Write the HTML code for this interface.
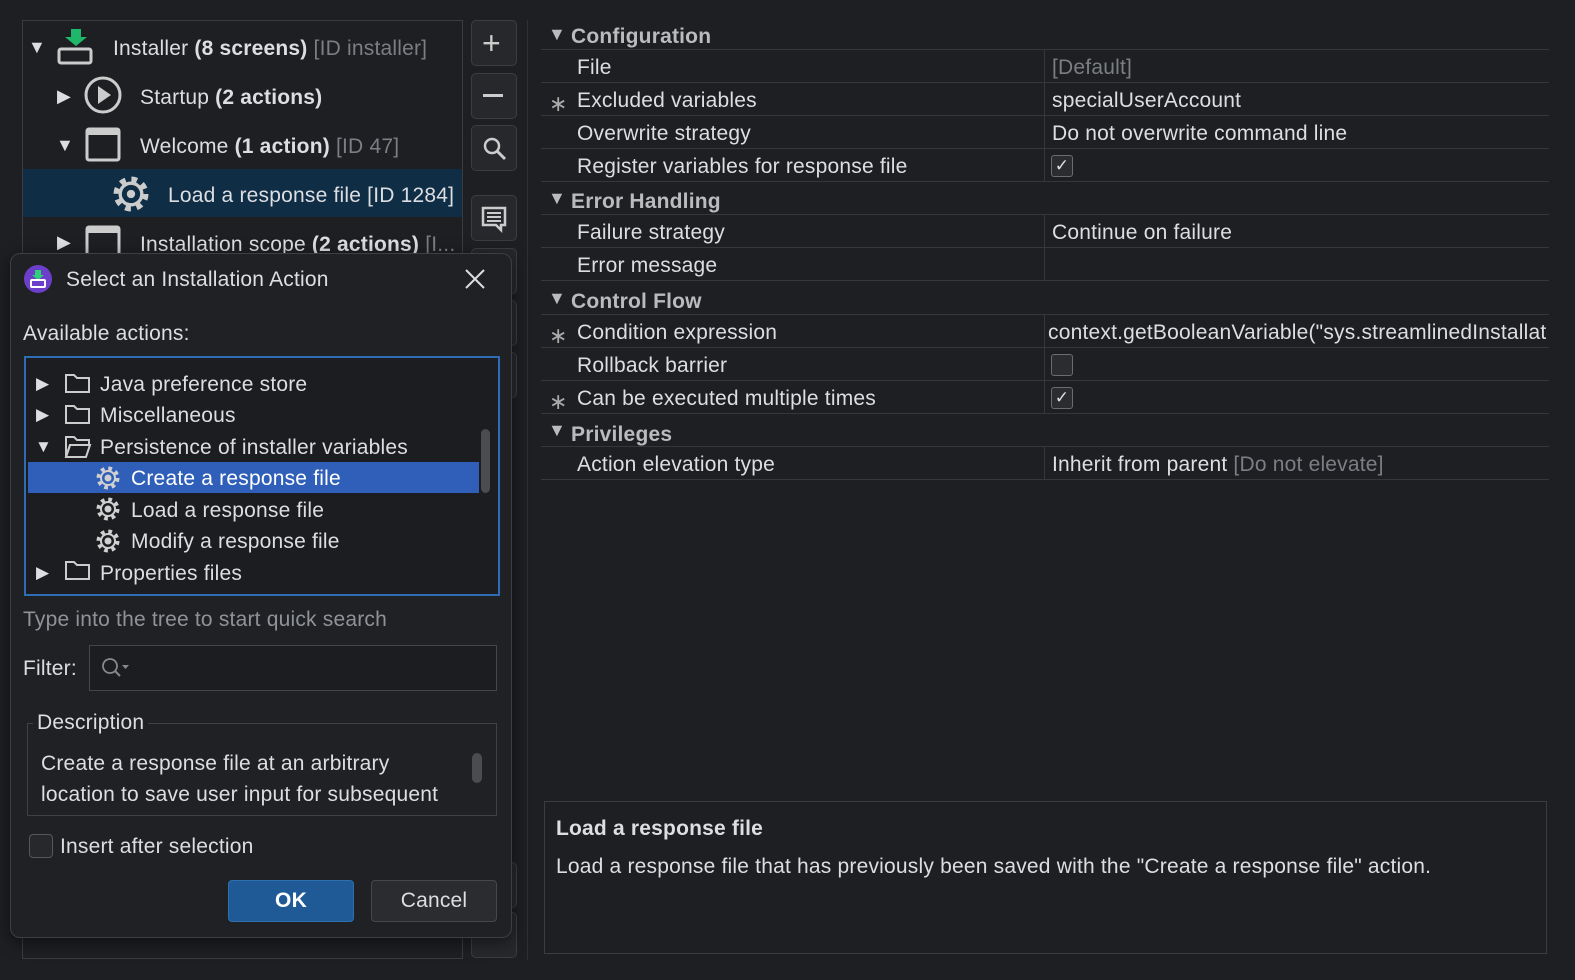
<!DOCTYPE html>
<html><head><meta charset="utf-8"><style>
*{box-sizing:border-box;margin:0;padding:0}
body{width:1575px;height:980px;background:#1e1f22;font-family:"Liberation Sans",sans-serif;color:#dcdee2;font-size:21px;letter-spacing:0.2px;position:relative;overflow:hidden}
.a{position:absolute;white-space:nowrap}
.t2{margin-top:2px}
.g{color:#7b7e83}
b{font-weight:bold}
.btn{position:absolute;left:471px;width:46px;height:46px;border:1px solid #3b3d41;border-radius:5px;background:#26282b}
.row{position:absolute;left:541px;width:1008px;border-bottom:1px solid #35373b}
.row .k{position:absolute;left:36px;top:6px}
.row .v{position:absolute;left:511px;top:6px}
.row .vl{position:absolute;left:503px;top:0;bottom:0;border-left:1px solid #35373b}
.hd{font-weight:bold;color:#b9bbbf}
.hd .t{position:absolute;left:7px;top:4px;font-size:18px}
.hd .k{left:30px}
.st{position:absolute;left:8px;top:8px;font-size:22px;color:#aaa}
.cb{position:absolute;left:510px;top:6px;width:22px;height:22px;border:1.5px solid #6a6c70;border-radius:3px;background:#2a2c2f;font-size:17px;text-align:center;line-height:19px;color:#e0e0e0}
</style></head><body>

<div class="a" style="left:22px;top:20px;width:441px;height:939px;border:1px solid #3a3c40"></div>
<div class="a" style="left:23px;top:169px;width:439px;height:48px;background:#0f2d45"></div>
<div class="a" style="left:28px;top:37px;font-size:18px">▼</div>
<svg class="a" style="left:56px;top:27px" width="40" height="40"><path d="M15 2h10v8h6l-11 9-11-9h6z" fill="#1fb86a"/><rect x="3" y="22" width="32" height="14" rx="2" fill="none" stroke="#ccc" stroke-width="3"/></svg>
<div class="a" style="left:113px;top:37px">Installer <b>(8 screens)</b> <span class="g">[ID installer]</span></div>
<div class="a" style="left:57px;top:86px;font-size:18px">▶</div>
<svg class="a" style="left:84px;top:76px" width="40" height="40"><circle cx="19" cy="19" r="17" fill="none" stroke="#ccc" stroke-width="3"/><path d="M14 10l13 9-13 9z" fill="#ccc"/></svg>
<div class="a" style="left:140px;top:86px">Startup <b>(2 actions)</b></div>
<div class="a" style="left:56px;top:135px;font-size:18px">▼</div>
<svg class="a" style="left:85px;top:127px" width="38" height="36"><rect x="2" y="2" width="32" height="31" rx="2" fill="none" stroke="#ccc" stroke-width="3"/><rect x="2" y="2" width="32" height="6" fill="#ccc"/></svg>
<div class="a" style="left:140px;top:135px">Welcome <b>(1 action)</b> <span class="g">[ID 47]</span></div>
<svg class="a" style="left:111px;top:174px" width="40" height="40" viewBox="0 0 24 24"><circle cx="12" cy="12" r="8" fill="none" stroke="#ccc" stroke-width="5" stroke-dasharray="3.1 3.18"/><circle cx="12" cy="12" r="6.5" fill="none" stroke="#ccc" stroke-width="2"/><circle cx="12" cy="12" r="2.5" fill="#ccc"/></svg>
<div class="a" style="left:168px;top:184px">Load a response file [ID 1284]</div>
<div class="a" style="left:57px;top:232px;font-size:18px">▶</div>
<svg class="a" style="left:85px;top:225px" width="38" height="30"><rect x="2" y="2" width="32" height="31" rx="2" fill="none" stroke="#ccc" stroke-width="3"/><rect x="2" y="2" width="32" height="6" fill="#ccc"/></svg>
<div class="a" style="left:140px;top:233px">Installation scope <b>(2 actions)</b> <span class="g">[I...</span></div>

<div class="btn" style="top:20px"><div class="a" style="left:10px;top:4px;font-size:32px;color:#ccc">+</div></div>
<div class="btn" style="top:73px"><div class="a" style="left:11px;top:20px;width:20px;height:3px;background:#ccc"></div></div>
<div class="btn" style="top:125px"><svg class="a" style="left:9px;top:9px" width="28" height="28"><circle cx="11" cy="11" r="7" fill="none" stroke="#ccc" stroke-width="2.5"/><path d="M16 16l8 8" stroke="#ccc" stroke-width="3"/></svg></div>
<div class="btn" style="top:195px"><svg class="a" style="left:9px;top:10px" width="28" height="28"><path d="M2 2h22v17h-4v5l-5-5H2z" fill="none" stroke="#ccc" stroke-width="2.5"/><path d="M6 7h14M6 11h14M6 15h14" stroke="#ccc" stroke-width="2"/></svg></div>
<div class="btn" style="top:248px"></div><div class="btn" style="top:300px"></div><div class="btn" style="top:352px"></div><div class="btn" style="top:862px"></div><div class="btn" style="top:912px"></div>
<div class="a" style="left:527px;top:20px;width:1px;height:940px;background:#2e3034"></div>

<div class="row hd" style="top:20px;height:30px"><span class="t">▼</span><span class="k a" style="top:5px">Configuration</span></div>
<div class="row" style="top:50px;height:33px"><span class="k">File</span><span class="vl"></span><span class="v g">[Default]</span></div>
<div class="row" style="top:83px;height:33px"><span class="st">∗</span><span class="k">Excluded variables</span><span class="vl"></span><span class="v">specialUserAccount</span></div>
<div class="row" style="top:116px;height:33px"><span class="k">Overwrite strategy</span><span class="vl"></span><span class="v">Do not overwrite command line</span></div>
<div class="row" style="top:149px;height:33px"><span class="k">Register variables for response file</span><span class="vl"></span><span class="cb">✓</span></div>
<div class="row hd" style="top:182px;height:33px"><span class="t" style="top:6px">▼</span><span class="k a" style="top:8px">Error Handling</span></div>
<div class="row" style="top:215px;height:33px"><span class="k">Failure strategy</span><span class="vl"></span><span class="v">Continue on failure</span></div>
<div class="row" style="top:248px;height:33px"><span class="k">Error message</span><span class="vl"></span></div>
<div class="row hd" style="top:281px;height:34px"><span class="t" style="top:7px">▼</span><span class="k a" style="top:9px">Control Flow</span></div>
<div class="row" style="top:315px;height:33px"><span class="st">∗</span><span class="k">Condition expression</span><span class="vl"></span><span class="v" style="left:507px">context.getBooleanVariable("sys.streamlinedInstallat</span></div>
<div class="row" style="top:348px;height:33px"><span class="k">Rollback barrier</span><span class="vl"></span><span class="cb"></span></div>
<div class="row" style="top:381px;height:33px"><span class="st">∗</span><span class="k">Can be executed multiple times</span><span class="vl"></span><span class="cb">✓</span></div>
<div class="row hd" style="top:414px;height:33px"><span class="t" style="top:6px">▼</span><span class="k a" style="top:9px">Privileges</span></div>
<div class="row" style="top:447px;height:33px"><span class="k">Action elevation type</span><span class="vl"></span><span class="v">Inherit from parent <span class="g">[Do not elevate]</span></span></div>

<div class="a" style="left:544px;top:801px;width:1003px;height:153px;border:1px solid #3a3c40"></div>
<div class="a" style="left:556px;top:817px"><b>Load a response file</b></div>
<div class="a" style="left:556px;top:855px">Load a response file that has previously been saved with the "Create a response file" action.</div>

<div class="a" style="left:10px;top:253px;width:502px;height:685px;background:#202124;border:1px solid #3d3f43;border-radius:10px;box-shadow:0 4px 16px rgba(0,0,0,.5)"></div>
<svg class="a" style="left:24px;top:265px" width="28" height="28"><circle cx="14" cy="14" r="14" fill="#6b3fc9"/><path d="M11 5h6v5h3l-6 5-6-5h3z" fill="#2ecf7a"/><rect x="7" y="15" width="14" height="7" rx="1" fill="none" stroke="#fff" stroke-width="2"/></svg>
<div class="a" style="left:66px;top:268px">Select an Installation Action</div>
<svg class="a" style="left:464px;top:268px" width="22" height="22"><path d="M2 2l18 18M20 2L2 20" stroke="#ddd" stroke-width="2"/></svg>
<div class="a" style="left:23px;top:322px">Available actions:</div>
<div class="a" style="left:24px;top:356px;width:476px;height:240px;border:2px solid #2e6db6;background:#1c1d20;overflow:hidden">
  <div class="a" style="left:2px;top:104px;width:451px;height:31px;background:#2f5fb8"></div>
  <div class="a" style="left:455px;top:71px;width:9px;height:64px;border-radius:5px;background:#4a4c50"></div>
</div>
<svg class="a" style="left:64px;top:371px" width="28" height="210"><g fill="none" stroke="#ccc" stroke-width="2"><path d="M2 4h8l3 3h12v14H2z"/><path d="M2 35h8l3 3h12v14H2z"/><path d="M2 66h8l3 3h12v5H6l-4 12z"/><path d="M6 74h20l-4 12H2z"/><path d="M2 191h8l3 3h12v14H2z"/></g></svg>
<div class="a" style="left:36px;top:374px;font-size:17px">▶</div><div class="a" style="left:100px;top:373px">Java preference store</div>
<div class="a" style="left:36px;top:405px;font-size:17px">▶</div><div class="a" style="left:100px;top:404px">Miscellaneous</div>
<div class="a" style="left:35px;top:437px;font-size:17px">▼</div><div class="a" style="left:100px;top:436px">Persistence of installer variables</div>
<div class="a" style="left:131px;top:467px;color:#fff">Create a response file</div>
<div class="a" style="left:131px;top:499px">Load a response file</div>
<div class="a" style="left:131px;top:530px">Modify a response file</div>
<div class="a" style="left:36px;top:563px;font-size:17px">▶</div><div class="a" style="left:100px;top:562px">Properties files</div>
<svg class="a" style="left:94px;top:464px" width="28" height="92" viewBox="0 0 28 92"><g fill="none" stroke="#d0d0d0"><g transform="translate(14 14)"><circle r="9" stroke-width="5" stroke-dasharray="3.5 3.57"/><circle r="7" stroke-width="2"/><circle r="3" fill="#d0d0d0"/></g><g transform="translate(14 45)"><circle r="9" stroke-width="5" stroke-dasharray="3.5 3.57"/><circle r="7" stroke-width="2"/><circle r="3" fill="#d0d0d0"/></g><g transform="translate(14 77)"><circle r="9" stroke-width="5" stroke-dasharray="3.5 3.57"/><circle r="7" stroke-width="2"/><circle r="3" fill="#d0d0d0"/></g></g></svg>
<div class="a" style="left:23px;top:608px;color:#8f9297">Type into the tree to start quick search</div>
<div class="a" style="left:23px;top:657px">Filter:</div>
<div class="a" style="left:89px;top:645px;width:408px;height:46px;border:1px solid #45474b;background:#1c1d20"></div>
<svg class="a" style="left:100px;top:656px" width="32" height="24"><circle cx="10" cy="10" r="7" fill="none" stroke="#888" stroke-width="1.8"/><path d="M15 15l5 5" stroke="#888" stroke-width="2"/><path d="M22 9h7l-3.5 4z" fill="#888"/></svg>
<div class="a" style="left:27px;top:723px;width:470px;height:93px;border:1px solid #3f4145"></div>
<div class="a" style="left:33px;top:711px;background:#202124;padding:0 4px">Description</div>
<div class="a" style="left:41px;top:752px">Create a response file at an arbitrary</div>
<div class="a" style="left:41px;top:783px">location to save user input for subsequent</div>
<div class="a" style="left:472px;top:753px;width:10px;height:30px;border-radius:5px;background:#4a4c50"></div>
<div class="a" style="left:29px;top:834px;width:24px;height:24px;border:1.5px solid #55575b;border-radius:4px;background:#26282b"></div>
<div class="a" style="left:60px;top:835px">Insert after selection</div>
<div class="a" style="left:228px;top:880px;width:126px;height:42px;background:#1f5a96;border:1px solid #2e6fb0;border-radius:4px;text-align:center;line-height:40px;font-weight:bold;color:#fff">OK</div>
<div class="a" style="left:371px;top:880px;width:126px;height:42px;background:#2a2c2f;border:1px solid #45474b;border-radius:4px;text-align:center;line-height:40px">Cancel</div>
</body></html>
